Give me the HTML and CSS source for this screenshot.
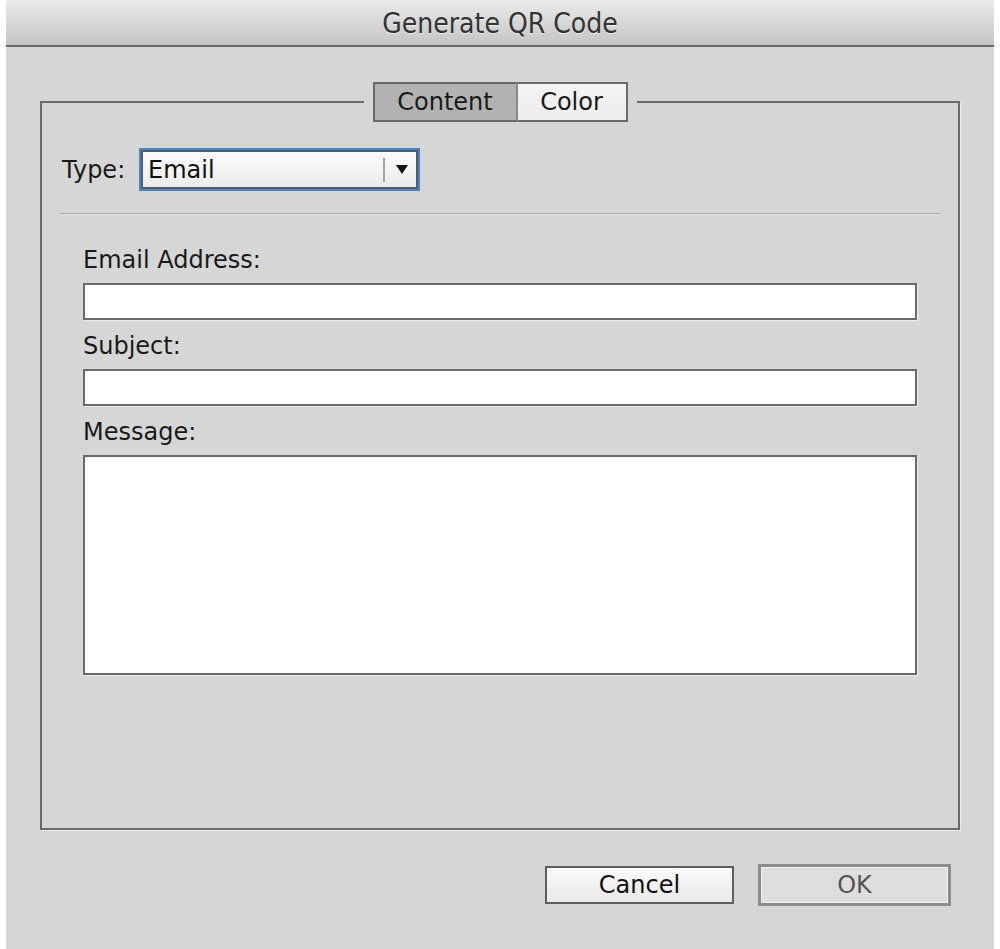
FILE: index.html
```html
<!DOCTYPE html>
<html>
<head>
<meta charset="utf-8">
<title>Generate QR Code</title>
<link rel="stylesheet" href="styles.css">
</head>
<body>
<div class="window">
  <div class="titlebar">Generate QR Code</div>
  <div class="content">
    <fieldset class="group">
      <legend class="tabs">
        <span class="tab tab-active">Content</span><span class="tab">Color</span>
      </legend>
      <div class="type-row">
        <span class="type-label">Type:</span>
        <div class="select">
          <span class="select-value">Email</span>
          <span class="select-sep"></span>
          <span class="select-arrow"></span>
        </div>
      </div>
      <div class="divider"></div>
      <div class="fields">
        <div class="field-label">Email Address:</div>
        <div class="input"></div>
        <div class="field-label">Subject:</div>
        <div class="input"></div>
        <div class="field-label">Message:</div>
        <div class="input textarea"></div>
      </div>
    </fieldset>
    <div class="buttons">
      <div class="btn btn-cancel">Cancel</div>
      <div class="btn btn-ok">OK</div>
    </div>
  </div>
</div>
</body>
</html>
```

FILE: styles.css
```css
html, body {
  margin: 0;
  padding: 0;
  background: #ffffff;
}
body {
  font-family: "DejaVu Sans", "Liberation Sans", sans-serif;
  font-size: 24px;
  color: #1a1a1a;
}
.window {
  margin-left: 6px;
  width: 988px;
  height: 949px;
  background: #d6d6d6;
  border-radius: 4px 4px 0 0;
  overflow: hidden;
}
.titlebar {
  height: 45px;
  line-height: 48px;
  text-align: center;
  background: linear-gradient(#ebebeb, #c4c4c4);
  border-bottom: 2px solid #6c6c6c;
  font-family: "DejaVu Sans Condensed", "DejaVu Sans", sans-serif;
  font-stretch: condensed;
  font-size: 28px;
  color: #333333;
  text-shadow: 0 1px 0 rgba(255,255,255,0.6);
}
.content {
  padding: 35px 0 0 34px;
}
.group {
  margin: 0;
  width: 916px;
  padding: 0 0 153px 0;
  border: 2px solid #6a6a6a;
  box-shadow: 1px 1px 0 #ececec;
  min-width: 0;
}
.tabs {
  margin: 0 auto;
  padding: 0 9px;
  display: flex;
  height: 40px;
}
.tab {
  display: flex;
  align-items: center;
  justify-content: center;
  height: 36px;
  border: 2px solid #6a6a6a;
  background: linear-gradient(#f4f4f4, #ececec);
  color: #1a1a1a;
}
.tab-active {
  width: 141px;
  background: #b2b2b2;
  border-right: 2px solid #8a8a8a;
}
.tab + .tab {
  width: 108px;
  border-left: none;
}
.type-row {
  display: flex;
  align-items: center;
  margin-top: 28px;
  padding-left: 20px;
}
.type-label {
  width: 79px;
}
.select {
  display: flex;
  align-items: center;
  width: 273px;
  height: 35px;
  border: 2px solid #5c5c5c;
  box-shadow: 0 0 0 2px #3f86d8;
  background: linear-gradient(#fbfbfb, #ececec);
}
.select-value {
  flex: 1;
  padding-left: 5px;
  color: #111;
}
.select-sep {
  width: 2px;
  height: 24px;
  background: #a6a6a6;
}
.select-arrow {
  width: 0;
  height: 0;
  margin: 0 8px 0 11px;
  border-left: 6px solid transparent;
  border-right: 6px solid transparent;
  border-top: 9px solid #111;
}
.divider {
  margin: 24px 18px 0 18px;
  height: 1px;
  background: #a9a9a9;
  border-bottom: 1px solid #e4e4e4;
}
.fields {
  display: flex;
  flex-direction: column;
  padding: 31px 41px 0 41px;
}
.field-label {
  height: 28px;
  line-height: 28px;
  color: #1a1a1a;
}
.input {
  margin-top: 9px;
  margin-bottom: 12px;
  height: 33px;
  background: #ffffff;
  border: 2px solid #6a6a6a;
  box-shadow: 1px 1px 0 #ececec;
}
.textarea {
  height: 216px;
  margin-bottom: 0;
}
.buttons {
  display: flex;
  justify-content: flex-end;
  align-items: center;
  gap: 24px;
  margin-top: 34px;
  padding-right: 43px;
}
.btn {
  display: flex;
  align-items: center;
  justify-content: center;
  box-sizing: border-box;
}
.btn-cancel {
  width: 189px;
  height: 38px;
  border: 2px solid #5e5e5e;
  background: linear-gradient(#fafafa, #e9e9e9);
  color: #111;
}
.btn-ok {
  width: 193px;
  height: 42px;
  border: 3px solid #8c8c8c;
  box-shadow: inset 0 0 0 1px #f0f0f0;
  background: #dedede;
  color: #555;
}
```
